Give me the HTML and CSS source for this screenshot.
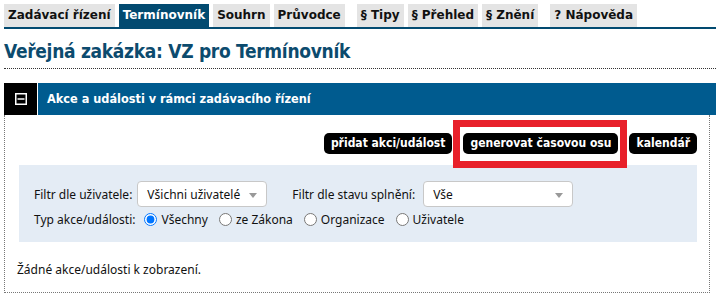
FILE: index.html
```html
<!DOCTYPE html>
<html lang="cs">
<head>
	<meta charset="UTF-8">
	<meta name="viewport" content="width=device-width, initial-scale=1.0">
	<link rel="stylesheet" href="styles.css">
	<title>Termínovník</title>
</head>
<body>
	<div class="page">
		<ul class="tabs">
			<li class="tab">Zadávací řízení</li>
			<li class="tab active">Termínovník</li>
			<li class="tab">Souhrn</li>
			<li class="tab">Průvodce</li>
			<li class="tab gap">§ Tipy</li>
			<li class="tab">§ Přehled</li>
			<li class="tab">§ Znění</li>
			<li class="tab gap">? Nápověda</li>
		</ul>
		<h1 class="title">Veřejná zakázka: VZ pro Termínovník</h1>

		<div class="panel">
			<div class="panel-head">
				<span class="toggle">
					<svg width="12" height="12" viewBox="0 0 12 12">
						<rect x="0.75" y="0.75" width="10.5" height="10.5" fill="none" stroke="#fff" stroke-width="1.5"/>
						<line x1="2.5" y1="6" x2="9.5" y2="6" stroke="#fff" stroke-width="1.5"/>
					</svg>
				</span>
				<span class="panel-title">Akce a události v rámci zadávacího řízení</span>
			</div>
			<div class="panel-body">
				<div class="actions">
					<a class="btn">přidat akci/událost</a>
					<span class="mark"><a class="btn">generovat časovou osu</a></span>
					<a class="btn">kalendář</a>
				</div>
				<div class="filters">
					<div class="row">
						<label class="lbl">Filtr dle uživatele:</label>
						<span class="select user">Všichni uživatelé</span>
						<label class="lbl second">Filtr dle stavu splnění:</label>
						<span class="select state">Vše</span>
					</div>
					<div class="row radios">
						<span class="lbl">Typ akce/události:</span>
						<label><input type="radio" name="typ" checked>Všechny</label>
						<label><input type="radio" name="typ">ze Zákona</label>
						<label><input type="radio" name="typ">Organizace</label>
						<label><input type="radio" name="typ">Uživatele</label>
					</div>
				</div>
				<p class="empty">Žádné akce/události k zobrazení.</p>
			</div>
		</div>
	</div>
</body>
</html>
```

FILE: styles.css
```css
body{
	margin:0;
	background:#fff;
	color:#111;
	font-family:"Noto Sans", sans-serif;
	font-size:12px;
}
.page{
	padding:4px 0 0 4px;
}
.tabs{
	display:flex;
	gap:4px;
	margin:0;
	padding:0;
	list-style:none;
	border-bottom:2px solid #024a70;
}
.tab{
	height:23px;
	line-height:23px;
	padding:0 4px;
	background:#e4e4e4;
	color:#111;
	font-family:"DejaVu Sans", sans-serif;
	font-weight:bold;
	font-size:12px;
}
.tab.active{
	background:#024a70;
	color:#fff;
}
.tab.gap{
	margin-left:8px;
}
.title{
	margin:0;
	padding:10px 0 5px;
	line-height:24px;
	border-bottom:1px dotted #333;
	color:#0c4b6e;
	font-family:"DejaVu Sans Condensed", "DejaVu Sans", sans-serif;
	font-size:19px;
	letter-spacing:-0.3px;
}
.panel{
	margin-top:14px;
}
.panel-head{
	display:flex;
	height:32px;
	gap:1px;
}
.toggle{
	width:33px;
	background:#000;
	display:flex;
	align-items:center;
	justify-content:center;
}
.panel-title{
	flex:1;
	background:#005b8f;
	color:#fff;
	padding-left:9px;
	line-height:32px;
	font-family:"DejaVu Sans Condensed", "DejaVu Sans", sans-serif;
	font-weight:bold;
	font-size:12.6px;
}
.panel-body{
	margin-right:6px;
	padding:0 12px 0 14px;
	border:1px dotted #777;
	border-top:none;
}
.actions{
	display:flex;
	justify-content:flex-end;
	align-items:center;
	padding-top:18px;
	height:21px;
	margin-bottom:11px;
}
.btn{
	display:inline-block;
	height:21px;
	line-height:20px;
	padding:0 7px;
	background:#000;
	color:#fff;
	border-radius:5px;
	font-family:"DejaVu Sans Condensed", "DejaVu Sans", sans-serif;
	font-weight:bold;
	font-size:12px;
	cursor:pointer;
}
.mark{
	margin:-13px 2px -14px 1px;
	padding:6px 2px 7px 3px;
	border:7px solid #e8202a;
	position:relative;
	z-index:1;
}
.filters{
	background:#e4ecf5;
	padding:16px 15px 13px;
	font-size:12px;
}
.row{
	display:flex;
	align-items:center;
}
.lbl{
	margin-right:5px;
}
.lbl.second{
	margin-left:25px;
}
.select{
	position:relative;
	box-sizing:border-box;
	height:26px;
	line-height:26px;
	padding:0 9px;
	background:#fff;
	border:1px solid #c8c8c8;
	border-radius:4px;
}
.select::after{
	content:"";
	position:absolute;
	right:9px;
	top:11px;
	border:4px solid transparent;
	border-top:5px solid #999;
}
.select.user{
	width:130px;
}
.select.state{
	width:150px;
	margin-left:3px;
}
.radios{
	margin-top:2px;
	height:20px;
}
.radios label{
	display:flex;
	align-items:center;
	margin-right:7px;
}
.radios input{
	margin:0 4px 0 4px;
	width:13px;
	height:13px;
}
.empty{
	margin:0 0 0 -2px;
	padding:18px 0 12px;
	font-size:12px;
	line-height:20px;
}
```
